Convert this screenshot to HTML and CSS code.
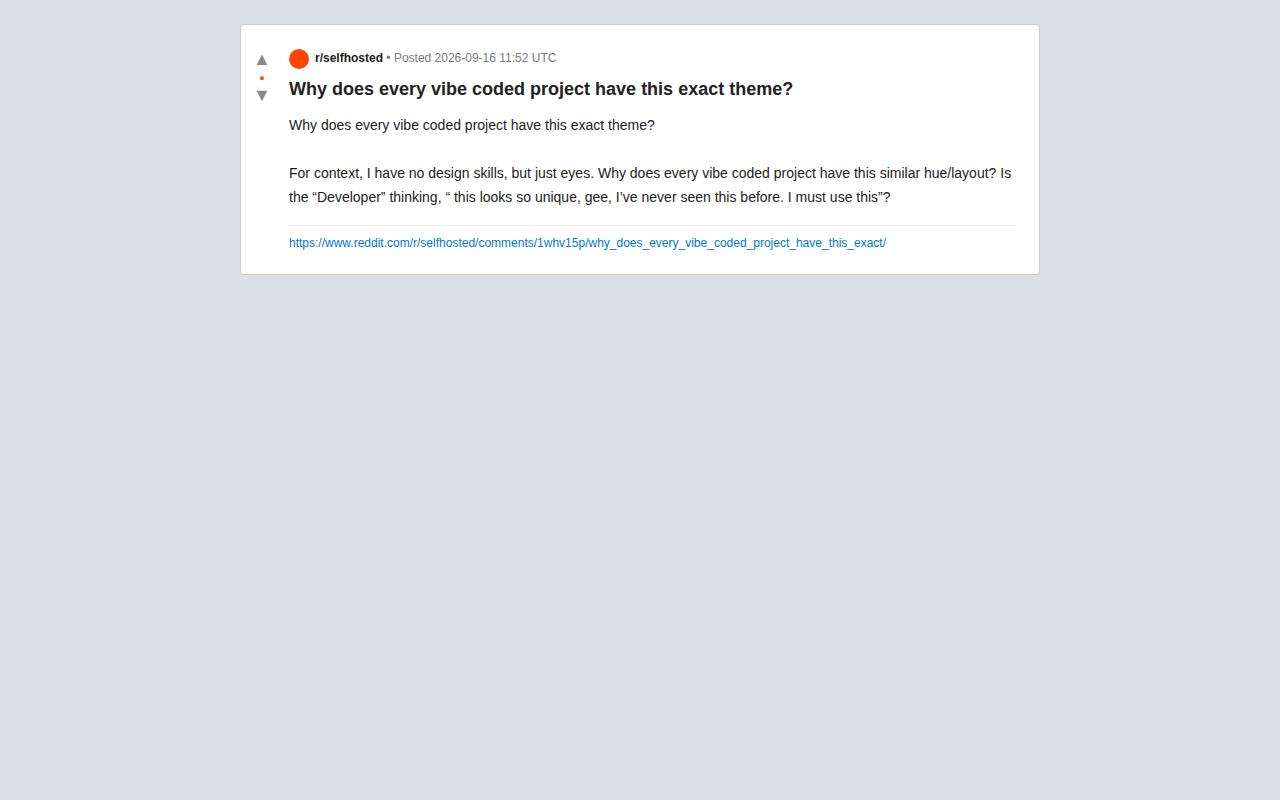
FILE: index.html
```
<!DOCTYPE html>
<html lang="en">
<head>
<meta charset="utf-8">
<meta name="viewport" content="width=device-width, initial-scale=1">
<title>r/selfhosted</title>
<link rel="stylesheet" href="styles.css">
</head>
<body>
<article class="post">
  <div class="votes">
    <button class="vote" type="button" aria-label="Upvote">▲</button>
    <span class="score">•</span>
    <button class="vote" type="button" aria-label="Downvote">▼</button>
  </div>
  <div class="content">
    <div class="meta">
      <span class="avatar"></span>
      <span><strong class="community">r/selfhosted</strong> • Posted 2026-09-16 11:52 UTC</span>
    </div>
    <h1 class="title">Why does every vibe coded project have this exact theme?</h1>
    <div class="text">
      <p class="paragraph">Why does every vibe coded project have this exact theme?</p>
      <p class="paragraph">For context, I have no design skills, but just eyes. Why does every vibe coded project have this similar hue/layout? Is the “Developer” thinking, “ this looks so unique, gee, I’ve never seen this before. I must use this”?</p>
    </div>
    <div class="source"><a class="link" href="https://www.reddit.com/r/selfhosted/comments/1whv15p/why_does_every_vibe_coded_project_have_this_exact/">https://www.reddit.com/r/selfhosted/comments/1whv15p/why_does_every_vibe_coded_project_have_this_exact/</a></div>
  </div>
</article>
</body>
</html>
```
FILE: styles.css
```
* { box-sizing: border-box; }
body {
  margin: 0;
  padding: 24px;
  background: #dae0e6;
  color: #1c1c1c;
  font-family: "Liberation Sans", Arial, sans-serif;
  font-size: 14px;
}
.post {
  display: flex;
  gap: 18px;
  max-width: 800px;
  margin: 0 auto;
  padding: 24px 24px 24px 12px;
  background: #fff;
  border: 1px solid #ccc;
  border-radius: 4px;
}
.votes {
  display: flex;
  flex: 0 0 18px;
  flex-direction: column;
  align-items: center;
}
.vote {
  padding: 0;
  border: 0;
  background: none;
  color: #878a8c;
  font: inherit;
  font-size: 18px;
  line-height: 21px;
}
.score {
  color: #ff4500;
  font-size: 13px;
  font-weight: 700;
  line-height: 15px;
}
.content { flex: 1; min-width: 0; }
.meta {
  display: flex;
  align-items: flex-start;
  gap: 6px;
  margin-bottom: 8px;
  color: #787c7e;
  font-size: 12px;
  line-height: 18px;
}
.avatar {
  width: 20px;
  height: 20px;
  border-radius: 50%;
  background: #ff4500;
}
.community { color: #1c1c1c; }
.title {
  margin: 0 0 12px;
  color: #222;
  font-size: 18px;
  line-height: 24px;
}
.text { line-height: 24px; }
.paragraph { margin: 0 0 24px; }
.paragraph:last-child { margin: 0; }
.source {
  margin-top: 16px;
  padding-top: 10px;
  border-top: 1px solid #edeff1;
  font-size: 12px;
  line-height: 14px;
}
.link { color: #0079d3; text-decoration: none; overflow-wrap: anywhere; }
```
